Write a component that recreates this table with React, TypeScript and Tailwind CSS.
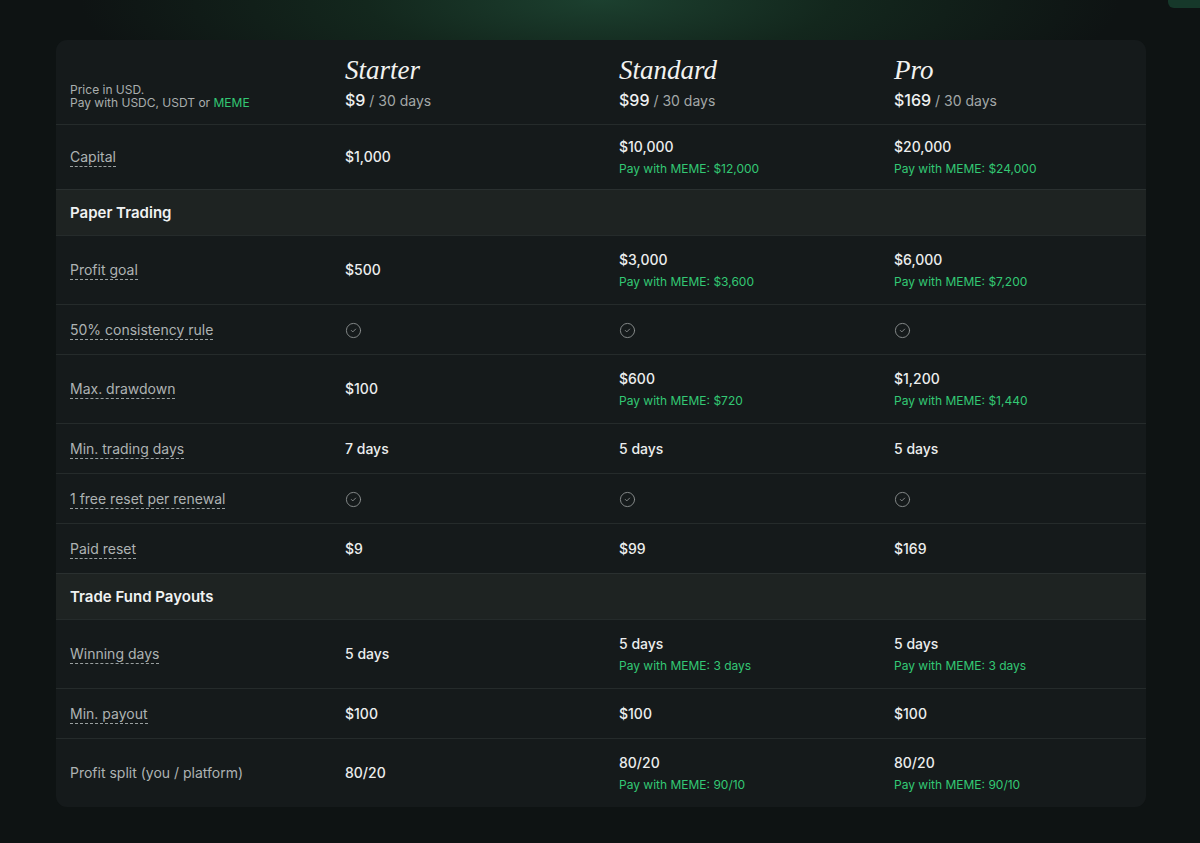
import { CircleCheck } from "lucide-react";

type Cell = { value?: string; meme?: string; check?: boolean };
type Row =
  | { kind: "section"; title: string }
  | { kind: "row"; label: string; dashed?: boolean; cells: Cell[]; tight?: boolean };

const plans = [
  { name: "Starter", price: "$9" },
  { name: "Standard", price: "$99" },
  { name: "Pro", price: "$169" }
];

const rows: Row[] = [
  {
    kind: "row",
    label: "Capital",
    dashed: true,
    tight: true,
    cells: [
      { value: "$1,000" },
      { value: "$10,000", meme: "Pay with MEME: $12,000" },
      { value: "$20,000", meme: "Pay with MEME: $24,000" }
    ]
  },
  { kind: "section", title: "Paper Trading" },
  {
    kind: "row",
    label: "Profit goal",
    dashed: true,
    cells: [
      { value: "$500" },
      { value: "$3,000", meme: "Pay with MEME: $3,600" },
      { value: "$6,000", meme: "Pay with MEME: $7,200" }
    ]
  },
  {
    kind: "row",
    label: "50% consistency rule",
    dashed: true,
    cells: [{ check: true }, { check: true }, { check: true }]
  },
  {
    kind: "row",
    label: "Max. drawdown",
    dashed: true,
    cells: [
      { value: "$100" },
      { value: "$600", meme: "Pay with MEME: $720" },
      { value: "$1,200", meme: "Pay with MEME: $1,440" }
    ]
  },
  {
    kind: "row",
    label: "Min. trading days",
    dashed: true,
    cells: [{ value: "7 days" }, { value: "5 days" }, { value: "5 days" }]
  },
  {
    kind: "row",
    label: "1 free reset per renewal",
    dashed: true,
    cells: [{ check: true }, { check: true }, { check: true }]
  },
  {
    kind: "row",
    label: "Paid reset",
    dashed: true,
    cells: [{ value: "$9" }, { value: "$99" }, { value: "$169" }]
  },
  { kind: "section", title: "Trade Fund Payouts" },
  {
    kind: "row",
    label: "Winning days",
    dashed: true,
    cells: [
      { value: "5 days" },
      { value: "5 days", meme: "Pay with MEME: 3 days" },
      { value: "5 days", meme: "Pay with MEME: 3 days" }
    ]
  },
  {
    kind: "row",
    label: "Min. payout",
    dashed: true,
    cells: [{ value: "$100" }, { value: "$100" }, { value: "$100" }]
  },
  {
    kind: "row",
    label: "Profit split (you / platform)",
    cells: [
      { value: "80/20" },
      { value: "80/20", meme: "Pay with MEME: 90/10" },
      { value: "80/20", meme: "Pay with MEME: 90/10" }
    ]
  }
];

const grid = "grid grid-cols-[275px_274px_275px_1fr]";

function ValueCell({ cell }: { cell: Cell }) {
  if (cell.check) {
    return (
      <div className="flex h-5 items-center px-[14px]">
        <CircleCheck size={17} strokeWidth={1.3} className="text-[#8b9090]" />
      </div>
    );
  }
  return (
    <div className="flex flex-col justify-center px-[14px]">
      <span className="text-[14px] leading-5 font-medium text-[#eceeee]">{cell.value}</span>
      {cell.meme ? (
        <span className="mt-1 text-[12px] leading-4 text-[#33c874]">{cell.meme}</span>
      ) : null}
    </div>
  );
}

export default function App() {
  return (
    <div
      className="relative min-h-[843px] bg-[#0e1313] pt-[40px] pr-[54px] pb-9 pl-[56px]"
      style={{ fontFamily: "Inter, 'Noto Sans', sans-serif" }}
    >
      <div className="pointer-events-none absolute inset-x-0 top-0 h-[140px] bg-[radial-gradient(ellipse_520px_130px_at_50%_0%,#1c402f_0%,#13271d_45%,transparent_100%)]" />
      <div className="absolute top-0 right-0 h-[8px] w-[32px] rounded-bl-md bg-[#16382a]" />

      <div className="relative overflow-hidden rounded-[11px] bg-[#151a1b]">
        {/* header */}
        <div className={`${grid} h-[84px]`}>
          <div className="flex items-end px-[14px] pb-[15px]">
            <p className="text-[12px] leading-[13px] text-[#a9aeae]">
              Price in USD.
              <br />
              Pay with USDC, USDT or <span className="text-[#33c874]">MEME</span>
            </p>
          </div>
          {plans.map((p) => (
            <div key={p.name} className="flex flex-col px-[14px] pt-[15px]">
              <span
                className="text-[27px] leading-[30px] italic text-[#f2f2f0]"
                style={{ fontFamily: "'Liberation Serif', 'DejaVu Serif', serif" }}
              >
                {p.name}
              </span>
              <span className="mt-[3px] leading-6">
                <span className="text-[16px] font-medium text-[#eef0f0]">{p.price}</span>
                <span className="text-[14px] text-[#a3a8a8]"> / 30 days</span>
              </span>
            </div>
          ))}
        </div>

        {rows.map((row, i) =>
          row.kind === "section" ? (
            <div
              key={i}
              className="border-t border-[#2a3030] bg-[#1e2322] px-[14px] py-3 text-[15px] leading-[21px] font-semibold text-[#f0f2f2]"
            >
              {row.title}
            </div>
          ) : (
            <div
              key={i}
              className={`${grid} border-t border-[#252b2b] ${
                row.tight
                  ? "py-[12px]"
                  : row.cells.some((c) => c.meme)
                    ? "py-[14px]"
                    : "pt-[15px] pb-[14px]"
              }`}
            >
              <div className="flex items-center px-[14px]">
                <span
                  className={`text-[14px] leading-[18px] text-[#aeb3b3] ${
                    row.dashed ? "border-b border-dashed border-[#9aa0a0]" : ""
                  }`}
                >
                  {row.label}
                </span>
              </div>
              {row.cells.map((c, j) => (
                <ValueCell key={j} cell={c} />
              ))}
            </div>
          )
        )}
      </div>
    </div>
  );
}
